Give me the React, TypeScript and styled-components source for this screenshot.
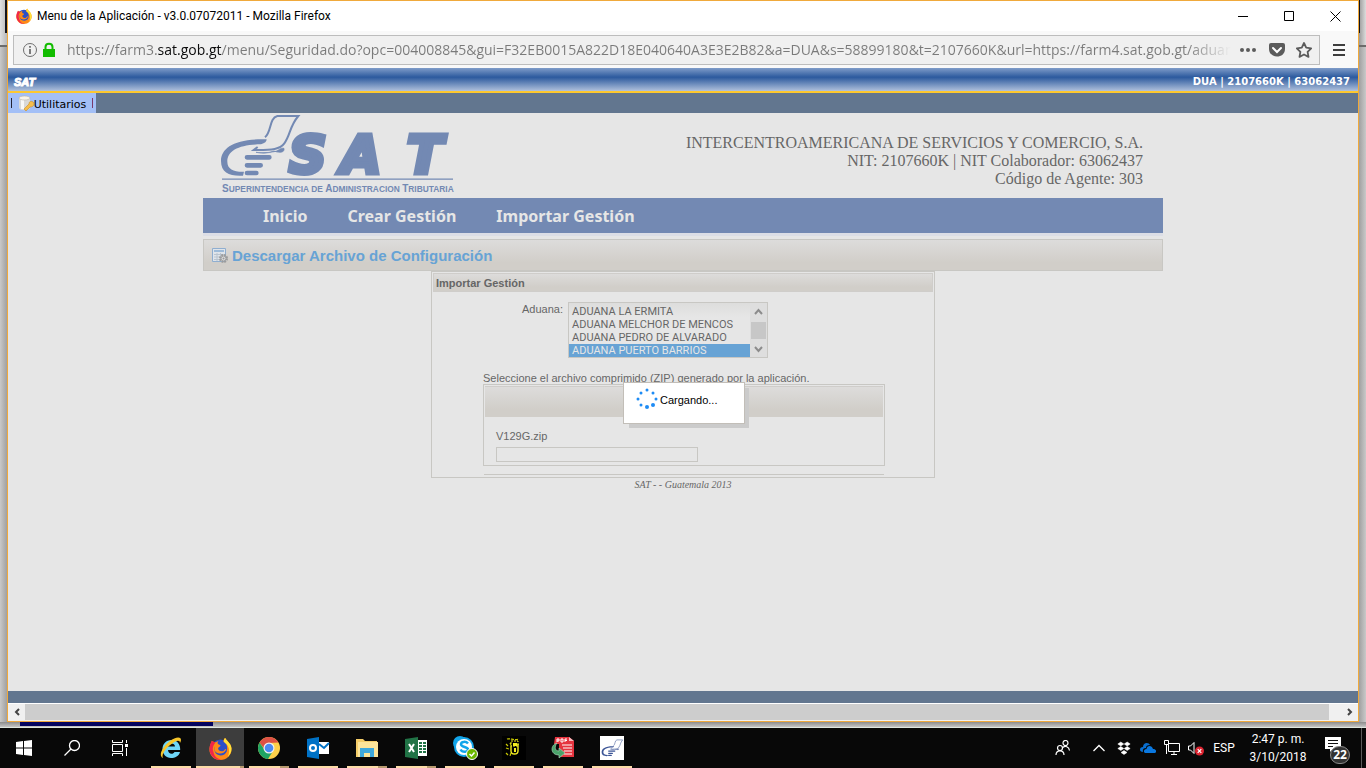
import React from 'react';
import styled, { createGlobalStyle } from 'styled-components';

const ui = '"Open Sans", "Noto Sans", sans-serif';
const arial = '"Liberation Sans", Arial, sans-serif';
const times = '"Liberation Serif", "Times New Roman", serif';
const verdana = '"DejaVu Sans", Verdana, sans-serif';

const c = {
  page: '#e6e6e6',
  brand: '#7389b3',
  slate: '#62768f',
  line: '#c8c7c3',
  text: '#666666',
  link: '#67a3d5',
  orange: '#f0a93b',
};

const panelFill = 'linear-gradient(#dddcdb, #d1cec9 75%)';

const Global = createGlobalStyle`
  * { box-sizing: border-box; }
  html, body { margin: 0; background: #060606; }
  button, input, select { font: inherit; margin: 0; }
  h1, h2, p { margin: 0; }
`;

const Desktop = styled.div`
  min-height: 100vh;
  display: flex;
  flex-direction: column;
  font-family: ${ui};
`;

const Stage = styled.div`
  flex: 1;
  display: flex;
`;

const Edge = styled.div<{ $side: 'left' | 'right' }>`
  width: 7px;
  display: flex;
  flex-direction: column;
  background: linear-gradient(${p => (p.$side === 'left' ? '90deg' : '270deg')}, #c9c9c9, #a0a0a0);
  &::before {
    content: '';
    height: 45px;
    background:
      linear-gradient(#15151c, #15151c) ${p => (p.$side === 'left' ? '5px' : '0')} 0 / ${p => (p.$side === 'left' ? 2 : 1)}px 33px no-repeat,
      ${p => (p.$side === 'left' ? 'linear-gradient(90deg, #e0e0e0, #b8b8b8)' : 'linear-gradient(90deg, #9a9a9a, #dcdcdc)')};
    border-bottom: 2px solid #6b6b6b;
  }
`;

const BottomEdge = styled.div`
  height: 6px;
  padding: 0 20px;
  background: linear-gradient(#8c8c8c, #c4c4c4);
  border-bottom: 1px solid #dfe6df;
`;

const NavyStrip = styled.div`
  width: 193px;
  height: 4px;
  background: #04045f;
`;

const Window = styled.div`
  flex: 1;
  min-width: 0;
  display: flex;
  flex-direction: column;
  border: 1px solid ${c.orange};
  background: ${c.page};
`;

const TitleBar = styled.header`
  height: 30px;
  display: flex;
  align-items: center;
  padding-left: 8px;
  gap: 5px;
  background: #fff;
  color: #000;
  font-family: Roboto, ${ui};
  font-size: 12px;
  svg { display: block; }
`;

const WindowButtons = styled.div`
  margin-left: auto;
  display: flex;
`;

const PlainButton = styled.button<{ $w?: number; $h?: number }>`
  width: ${p => p.$w ?? 28}px;
  height: ${p => p.$h ?? 30}px;
  flex: none;
  display: flex;
  align-items: center;
  justify-content: center;
  padding: 0;
  border: 0;
  background: none;
`;

const ToolBar = styled.div`
  height: 37px;
  display: flex;
  align-items: center;
  padding-left: 5px;
  background: #f9f9f9;
`;

const AddressBar = styled.div`
  flex: 1;
  min-width: 0;
  height: 30px;
  display: flex;
  align-items: center;
  padding: 0 0 0 7px;
  border: 1px solid #bdbdbd;
  background: #f0f0f0;
`;

const Address = styled.input`
  flex: 1;
  min-width: 0;
  height: 28px;
  margin-left: 8px;
  padding: 0;
  border: 0;
  outline: 0;
  font-size: 14px;
  color: #7a7a7a;
  background: linear-gradient(90deg, #7a7a7a 90px, #0c0c0d 90px, #0c0c0d 155px, #7a7a7a 155px);
  background-clip: text;
  -webkit-background-clip: text;
  -webkit-text-fill-color: transparent;
  mask-image: linear-gradient(270deg, transparent, #000 44px);
`;

const AppHeader = styled.div`
  height: 25px;
  display: flex;
  align-items: center;
  justify-content: space-between;
  padding: 4px 8px 0 6px;
  border-bottom: 2px solid #fdc82f;
  background: linear-gradient(#7f9cc9, #2c5a9e 40%, #b0c1dc);
  color: #fff;
  font: bold 10px ${verdana};
`;

const SmallLogo = styled.span`
  font: italic bold 11px ${arial};
  -webkit-text-stroke: 1px #fff;
`;

const MenuBar = styled.nav`
  height: 20px;
  display: flex;
  background: ${c.slate};
`;

const MenuTab = styled.button`
  width: 88px;
  display: flex;
  align-items: center;
  justify-content: space-between;
  padding: 0 3px;
  border: 0;
  background: #a3bff6;
  color: #000;
  font: 11px ${verdana};
  span { display: flex; align-items: flex-end; }
`;

const Bar = styled.i<{ $color: string }>`
  width: 1px;
  height: 10px;
  background: ${p => p.$color};
`;

const Page = styled.main`
  flex: 1;
  position: relative;
  border-bottom: 12px solid ${c.slate};
  color: ${c.text};
  font-family: ${arial};
  font-size: 11px;
`;

const Column = styled.div`
  width: 960px;
  max-width: 100%;
  margin: 0 auto;
`;

const Masthead = styled.div`
  height: 85px;
  display: flex;
  justify-content: space-between;
  padding: 0 20px 0 18px;
`;

const Company = styled.p`
  padding-top: 21px;
  text-align: right;
  font: 16px/18px ${times};
`;

const MainNav = styled.nav`
  height: 38px;
  display: flex;
  align-items: center;
  gap: 40px;
  padding-left: 60px;
  background: ${c.brand};
  border-bottom: 3px solid #dcdee6;
  a {
    color: ${c.page};
    text-decoration: none;
    font: bold 16px "Noto Sans", ${ui};
  }
`;

const PageTitle = styled.h1`
  height: 32px;
  display: flex;
  align-items: center;
  gap: 4px;
  margin-top: 3px;
  padding-left: 8px;
  border: 1px solid ${c.line};
  background: ${panelFill};
  color: ${c.link};
  font: bold 15px ${arial};
`;

const Panel = styled.section`
  width: 504px;
  height: 207px;
  margin: 0 auto;
  padding: 1px;
  border: 1px solid ${c.line};
`;

const PanelTitle = styled.h2`
  height: 19px;
  padding: 0 2px;
  border: 1px solid #cfcdca;
  background: ${panelFill};
  font: bold 11px/18px ${arial};
`;

const FieldRow = styled.div`
  display: flex;
  align-items: flex-start;
  gap: 5px;
  padding: 10px 0 0 89px;
  label { padding-top: 1px; line-height: 13px; }
`;

const ListFrame = styled.div`
  width: 200px;
  height: 56px;
  display: flex;
  border: 1px solid ${c.line};
  background: linear-gradient(#dddddc, ${c.page} 14px);
`;

const List = styled.select`
  flex: 1;
  height: 54px;
  padding: 2px 0 0;
  border: 0;
  border-radius: 0;
  outline: 0;
  overflow: hidden;
  scrollbar-width: none;
  background: none;
  color: ${c.text};
  font: 11px Roboto, ${arial};
  option {
    height: 13px;
    min-height: 13px;
    padding: 0 3px;
    line-height: 13px;
    color: ${c.text};
  }
  option:checked {
    color: ${c.page};
    background: linear-gradient(${c.link}, ${c.link});
  }
`;

const ListScroll = styled.div`
  width: 17px;
  display: flex;
  flex-direction: column;
  justify-content: space-between;
  align-items: center;
  background: #dedede;
`;

const Thumb = styled.div`
  width: 15px;
  height: 17px;
  background: #c7c7c7;
`;

const Upload = styled.div`
  width: 402px;
  margin: 14px 0 0 50px;
  line-height: 12px;
`;

const UploadBox = styled.div`
  height: 82px;
  padding: 1px;
  border: 1px solid ${c.line};
`;

const UploadHead = styled.div`
  height: 31px;
  border-top: 1px solid #cfcdca;
  background: ${panelFill};
`;

const UploadFile = styled.div`
  display: flex;
  flex-direction: column;
  align-items: flex-start;
  gap: 5px;
  padding: 13px 11px 0;
  input {
    width: 202px;
    height: 15px;
    border: 1px solid ${c.line};
    background: none;
  }
`;

const Rule = styled.hr`
  height: 1px;
  margin: 8px 1px 0;
  border: 0;
  background: ${c.line};
`;

const Footer = styled.p`
  text-align: center;
  font: italic 10px/14px ${times};
`;

const Loading = styled.div`
  position: absolute;
  top: 269px;
  left: 2px;
  right: 0;
  width: 122px;
  height: 42px;
  margin: 0 auto;
  display: flex;
  align-items: flex-start;
  gap: 2px;
  padding: 5px 12px;
  border: 1px solid #c2beb8;
  background: #fff;
  box-shadow: 5px 5px 0 -1px #cbcbcb;
  color: #000;
  line-height: 24px;
`;

const ScrollBar = styled.div`
  height: 18px;
  display: flex;
  justify-content: space-between;
  border-top: 1px solid #fff;
  border-bottom: 1px solid #f0f0f0;
  background: #cdcdcd;
`;

const ScrollButton = styled(PlainButton)`
  background: #f0f0f0;
`;

const TaskBar = styled.footer`
  height: 40px;
  display: flex;
  background: #080808;
  color: #fff;
`;

const Apps = styled.div`
  display: flex;
  gap: 1px;
  margin-left: 3px;
`;

const Task = styled.button<{ $active?: boolean; $stack?: boolean }>`
  width: 48px;
  height: 40px;
  display: flex;
  align-items: center;
  justify-content: center;
  padding: 0;
  border: 0;
  background:
    linear-gradient(#fbdba7, #fbdba7) ${p => (p.$active ? '0' : '4px')} 100% / ${p => (p.$active ? 44 : p.$stack ? 31 : 40)}px 2px no-repeat,
    linear-gradient(#b89b70, #b89b70) ${p => (p.$active ? '44px' : '35px')} 100% / ${p => (p.$active ? 4 : p.$stack ? 9 : 0)}px 2px no-repeat,
    ${p => (p.$active ? '#3d3d3d' : 'transparent')};
`;

const Tray = styled.div`
  margin-left: auto;
  display: flex;
  align-items: center;
  padding-right: 4px;
`;

const Language = styled.button`
  width: 32px;
  padding: 0;
  border: 0;
  background: none;
  color: #fff;
  font: 12px Roboto, ${ui};
`;

const Clock = styled.time`
  width: 76px;
  text-align: center;
  font: 12px/18px Roboto, ${ui};
`;

const Notices = styled.button`
  width: 46px;
  height: 40px;
  position: relative;
  padding: 0 0 4px 9px;
  border: 0;
  border-right: 1px solid #5a5a5a;
  background: none;
  text-align: left;
`;

const Badge = styled.span`
  position: absolute;
  left: 14px;
  top: 18px;
  width: 20px;
  height: 18px;
  border: 1px solid #8a8a8a;
  border-radius: 9px;
  background: #333;
  color: #fff;
  text-align: center;
  font: bold 12px/16px ${ui};
`;

const Firefox = ({ size }: { size: number }) => (
  <svg width={size} height={size} viewBox="0 0 24 24">
    <circle cx="12" cy="12.5" r="10" fill="#2b50c8" />
    <path d="M3 4C4 5 5 5.500 7 5.500c1.500-1 3-1 3-1C8 6 9 8 12 8.500c0 1.500-2 2-2.500 3 0 3 3 4 5.500 3 2-1 1-2 3-2-1 4-5 5.500-8.500 4.500C6 16 5 13 6 10c-1 1-1 4 1 7 4 4 10 2 11.500-2C20 10 18 6 15 5c0-2 1-4 2-4 1 3 6 5 6.500 11C24 19 18 24 12 24 5 24 0 19 .5 12 .8 9 2 7 3 4z" fill="#ff8a16" />
    <path d="M3 4C1 8 0 11 .8 15c1.500 6 7 9.500 12.500 9-5-1-8-4-8.500-8-2-4 0-8 2-10.500C5 5.500 4 5 3 4z" fill="#f0264a" />
    <path d="M17 1c1 3 6 5 6.500 11 0 4-2 7-4 9 2-4 2-9 0-12-1-2-4-3-4-4.500C15.500 3 16 1.500 17 1z" fill="#ffe23a" />
  </svg>
);

const Hand = () => (
  <>
    <path d="M200 103C105 100 63 128 63 168c0 36 26 46 66 44l3-12c-30 1-50-7-50-30 0-34 36-51 101-52 12-3 17-8 17-15z" />
    <path d="M195 97c20-16 12-58 37-64h63c-27 32-23 56-42 82-12 17-35 21-92 20l12-9" fill="none" stroke="currentColor" strokeWidth="6" />
    <path d="M168 142c20 2 56 1 66-6 4-4 10-8 18-6 2 8-4 12-12 12-14 0-16-6-22-3-12 6-32 7-50 3z" stroke="currentColor" strokeWidth="2" />
    <path d="M141 157h67M141 181h41M141 204h28" fill="none" stroke="currentColor" strokeWidth="14" strokeLinecap="round" />
  </>
);

const Logo = () => (
  <svg width="234" height="82" viewBox="0 0 234 82" fill={c.brand} color={c.brand} role="img" aria-label="SAT">
    <g transform="translate(-21 -8) scale(.33333)"><Hand /></g>
    <g fontFamily="DejaVu Sans" fontWeight="bold" fontStyle="italic" fontSize="52" stroke={c.brand} strokeWidth="5">
      <text x="68" y="60">S</text>
      <text x="120" y="60">A</text>
      <text x="186" y="60">T</text>
    </g>
    <path d="M1 65.500h231v1.200H1z" />
    <g fontFamily="Liberation Sans" fontWeight="bold" fontSize="8.4">
      <text x="1" y="79">
        <tspan fontSize="10">S</tspan>UPERINTENDENCIA DE <tspan fontSize="10">A</tspan>DMINISTRACION <tspan fontSize="10">T</tspan>RIBUTARIA
      </text>
    </g>
  </svg>
);

const dots: [number, number, number][] = [
  [12, 3, 1.5], [18, 6, 1.5], [21, 12, 1.5], [18, 18, 2], [12, 20, 2], [6, 18, 1.5], [3, 12, 1.5], [6, 6, 1.5],
];

const Svg = ({ s = 24, w, h, children }: { s?: number; w?: number; h?: number; children: React.ReactNode }) => (
  <svg width={w ?? s} height={h ?? s} viewBox={`0 0 ${w ?? s} ${h ?? s}`} fill="none">{children}</svg>
);

const tasks: { name: string; active?: boolean; stack?: boolean; icon: React.ReactNode }[] = [
  {
    name: 'Internet Explorer',
    icon: (
      <Svg>
        <path d="M21 16c-1 4-5 6-9 6-5 0-8.500-4-8.500-9s3.500-9 9-9 9 4 8.700 10H9c0 4 5 5 6.500 2z M9 10.500h7c0-4-7-4-7 0z" fill="#6fd6f7" fillRule="evenodd" />
        <path d="M4 22C-1 20 3 11 11 5c5-4 11-5 11-1 0 1-.5 2-1 3 0-3-3-3-7 0C7 11 2 19 4 22z" fill="#f8c62a" />
      </Svg>
    ),
  },
  { name: 'Firefox', active: true, icon: <Firefox size={23} /> },
  {
    name: 'Chrome',
    stack: true,
    icon: (
      <Svg>
        <circle cx="12" cy="12" r="11" fill="#fdd04a" />
        <path d="M2.500 6.500A11 11 0 0 1 21.500 6.500L12 7 9 15z" fill="#dd5145" />
        <path d="M2.500 6.500A11 11 0 0 0 11 23l5-8-8-.5z" fill="#1fa463" />
        <circle cx="12" cy="12" r="5.500" fill="#f1f1f1" /><circle cx="12" cy="12" r="4.300" fill="#4a8af4" />
      </Svg>
    ),
  },
  {
    name: 'Outlook',
    icon: (
      <Svg>
        <path d="M12 6h11v12H12z" fill="#fff" /><path d="M13 8l5 4 5-5" stroke="#0072c6" strokeWidth="2" />
        <path d="M1 3l12-2v22L1 21z" fill="#0072c6" /><circle cx="7" cy="12" r="3" stroke="#fff" strokeWidth="2" />
      </Svg>
    ),
  },
  {
    name: 'Explorador de archivos',
    stack: true,
    icon: (
      <Svg>
        <path d="M1 3h7l2 2h12v16H1z" fill="#f5cd69" /><path d="M3 6h20v15H3z" fill="#fde59a" />
        <path d="M5 12h14v9h-4v-4H9v4H5z" fill="#3fa9dc" />
      </Svg>
    ),
  },
  {
    name: 'Excel',
    stack: true,
    icon: (
      <Svg>
        <path d="M12 4h11v16H12z" fill="#fff" />
        <path d="M15 7h3m1 0h3m-7 3h3m1 0h3m-7 3h3m1 0h3m-7 3h3m1 0h3" stroke="#217346" strokeWidth="2" />
        <path d="M1 3l13-2v22L1 21z" fill="#217346" /><path d="M5 8l5 8m0-8l-5 8" stroke="#fff" strokeWidth="2" />
      </Svg>
    ),
  },
  {
    name: 'Skype',
    icon: (
      <Svg w={26} h={26}>
        <circle cx="8" cy="8" r="7" fill="#12a5ea" /><circle cx="12" cy="12" r="10" fill="#12a5ea" />
        <circle cx="12" cy="12" r="8" fill="#fff" />
        <path d="M16 8.500c-2-2.500-7-2-7 .7 0 3.500 7 2 7 5.300 0 3-6 3-7.500 0" stroke="#12a5ea" strokeWidth="2.500" />
        <circle cx="20" cy="19" r="5.500" fill="#6bb700" stroke="#fff" /><path d="M17.500 19l2 2 3-3.500" stroke="#fff" strokeWidth="1.500" />
      </Svg>
    ),
  },
  {
    name: 'Escudo',
    icon: (
      <Svg>
        <path d="M0 0h24v24H0z" fill="#000" />
        <path d="M5 3c3-1 8 2 12 0M4 8l2 2m-2 2l3 1m-3 4l2 2m2-12l1 2m0 8l-1 3" stroke="#c9c900" strokeWidth="1.200" strokeDasharray="3 1" />
        <path d="M9 5h7v5H9z" stroke="#f4ee22" strokeDasharray="2 1" /><path d="M9 10v5c0 4 7 4 7 0V8" stroke="#f4ee22" strokeWidth="1.400" />
        <path d="M11 7h4v3h-4zM12 12h2v4h-2z" fill="#f4ee22" />
      </Svg>
    ),
  },
  {
    name: 'PDF',
    icon: (
      <Svg>
        <path d="M4 1h14l5 4v16H8V8H3z" fill="#e5343f" /><path d="M18 1v4h5" fill="#f8b9bd" />
        <path d="M11 9h10m-9 3h9m-8 3h8m-8 3h8" stroke="#fff" />
        <path d="M6 6V3h2v2H6m4-2v3h2V3h-2m4 3V3h2m-2 1.500h2" stroke="#fff" />
        <path d="M6 7C-1 9-1 19 8 19v3l6-5-6-5v3c-4 0-5-4-2-8z" fill="#4aa36a" stroke="#b6dcc3" strokeWidth=".6" />
      </Svg>
    ),
  },
  {
    name: 'SAT',
    icon: (
      <svg width="24" height="24" viewBox="45 5 265 235" fill="#3c5596" color="#3c5596">
        <path d="M45-10h265v270H45z" fill="#fff" /><Hand />
      </svg>
    ),
  },
];

const customs = ['ADUANA LA ERMITA', 'ADUANA MELCHOR DE MENCOS', 'ADUANA PEDRO DE ALVARADO', 'ADUANA PUERTO BARRIOS'];

export default function App() {
  return (
    <Desktop>
      <Global />
      <Stage>
        <Edge $side="left" />
        <Window>
          <TitleBar>
            <Firefox size={16} />
            <span>Menu de la Aplicación - v3.0.07072011 - Mozilla Firefox</span>
            <WindowButtons>
              <PlainButton $w={46} aria-label="Minimizar"><Svg s={11}><path d="M0 5.500h10" stroke="#000" /></Svg></PlainButton>
              <PlainButton $w={46} aria-label="Maximizar"><Svg s={11}><path d="M.5.5h9v9h-9z" stroke="#000" /></Svg></PlainButton>
              <PlainButton $w={46} aria-label="Cerrar"><Svg s={11}><path d="M.5.5l10 10m0-10l-10 10" stroke="#000" /></Svg></PlainButton>
            </WindowButtons>
          </TitleBar>
          <ToolBar>
            <AddressBar>
              <PlainButton $w={18} aria-label="Información del sitio">
                <Svg s={16}><circle cx="8" cy="8" r="6.500" stroke="#6e6e6e" /><path d="M8 7v5M8 4v1.800" stroke="#6e6e6e" strokeWidth="1.800" /></Svg>
              </PlainButton>
              <PlainButton $w={20} aria-label="Conexión segura">
                <Svg s={16}><path d="M2 7h12v8H2z" fill="#12bc00" /><path d="M4.500 8V5c0-4.500 7-4.500 7 0v3" stroke="#12bc00" strokeWidth="2" /></Svg>
              </PlainButton>
              <Address
                aria-label="Dirección"
                readOnly
                value="https://farm3.sat.gob.gt/menu/Seguridad.do?opc=004008845&gui=F32EB0015A822D18E040640A3E3E2B82&a=DUA&s=58899180&t=2107660K&url=https://farm4.sat.gob.gt/aduana-sin"
              />
              <PlainButton $w={34} aria-label="Acciones">
                <Svg s={16}><circle cx="2" cy="8" r="2" fill="#5b5b5b" /><circle cx="8" cy="8" r="2" fill="#5b5b5b" /><circle cx="14" cy="8" r="2" fill="#5b5b5b" /></Svg>
              </PlainButton>
              <PlainButton $w={24} aria-label="Pocket">
                <Svg s={16}><path d="M2 1h12q2 0 2 2v4c0 10-16 10-16 0V3q0-2 2-2z" fill="#5b5b5b" /><path d="M4 6l4 4 4-4" stroke="#fff" strokeWidth="2" strokeLinecap="round" /></Svg>
              </PlainButton>
              <PlainButton $w={30} aria-label="Marcador">
                <Svg s={16}><path d="M8 1l2.200 4.700 5 .7-3.600 3.500.9 5L8 12.500 3.500 14.900l.9-5L.8 6.400l5-.7z" stroke="#5b5b5b" strokeWidth="1.800" strokeLinejoin="round" /></Svg>
              </PlainButton>
            </AddressBar>
            <PlainButton $w={38} aria-label="Menú">
              <Svg s={12}><path d="M0 1h12M0 6h12M0 11h12" stroke="#3f3f3f" strokeWidth="2" /></Svg>
            </PlainButton>
          </ToolBar>

          <AppHeader>
            <SmallLogo>SAT</SmallLogo>
            <span>DUA | 2107660K | 63062437</span>
          </AppHeader>
          <MenuBar>
            <MenuTab>
              <Bar $color="#223" />
              <span>
                <Svg s={16}>
                  <path d="M1 3v10c1 3 10 3 11 0V3z" fill="#d9d9d9" /><path d="M3 4h3v10H3z" fill="#f8f8f8" />
                  <ellipse cx="6.500" cy="3" rx="5.500" ry="2" fill="#f7f3ea" stroke="#b9b2a2" strokeWidth=".6" />
                  <path d="M6 14l5-5c0-4 5-3 5 0 0 2-2 3-4 3l-4 4z" fill="#f6bd4b" stroke="#c98d25" strokeWidth=".6" />
                </Svg>
                Utilitarios
              </span>
              <Bar $color="#7a3a6a" />
            </MenuTab>
          </MenuBar>

          <Page>
            <Column>
              <Masthead>
                <Logo />
                <Company>
                  INTERCENTROAMERICANA DE SERVICIOS Y COMERCIO, S.A.<br />
                  NIT: 2107660K | NIT Colaborador: 63062437<br />
                  Código de Agente: 303
                </Company>
              </Masthead>
              <MainNav>
                <a href="#inicio">Inicio</a>
                <a href="#crear">Crear Gestión</a>
                <a href="#importar">Importar Gestión</a>
              </MainNav>
              <PageTitle>
                <Svg s={16}>
                  <path d="M.5 1.500h13v13H.5z" fill="#dfe4ea" stroke="#8faed0" />
                  <path d="M2 4h10" stroke="#9dbbd9" strokeWidth="2" /><path d="M2 7.500h10M2 10h10M2 12.500h10M5 6v8M8.500 6v8" stroke="#b9c4cf" />
                  <circle cx="11.500" cy="11.500" r="3.500" stroke="#9c9c9c" strokeWidth="2" strokeDasharray="1.800 .95" />
                  <circle cx="11.500" cy="11.500" r="2.500" fill="#ddd" stroke="#9c9c9c" /><circle cx="11.500" cy="11.500" r="1" fill="#999" />
                </Svg>
                Descargar Archivo de Configuración
              </PageTitle>
              <Panel>
                <PanelTitle>Importar Gestión</PanelTitle>
                <FieldRow>
                  <label htmlFor="aduana">Aduana:</label>
                  <ListFrame>
                    <List id="aduana" size={4} defaultValue={customs[3]}>
                      {customs.map(name => <option key={name}>{name}</option>)}
                    </List>
                    <ListScroll>
                      <Svg w={9} h={18}><path d="M1 11l3.500-4L8 11" stroke="#8c8c8c" strokeWidth="2" /></Svg>
                      <Thumb />
                      <Svg w={9} h={18}><path d="M1 8l3.500 4L8 8" stroke="#8c8c8c" strokeWidth="2" /></Svg>
                    </ListScroll>
                  </ListFrame>
                </FieldRow>
                <Upload>
                  <p>Seleccione el archivo comprimido (ZIP) generado por la aplicación.</p>
                  <UploadBox>
                    <UploadHead />
                    <UploadFile>
                      <label htmlFor="archivo">V129G.zip</label>
                      <input id="archivo" readOnly />
                    </UploadFile>
                  </UploadBox>
                  <Rule />
                </Upload>
              </Panel>
              <Footer>SAT - - Guatemala 2013</Footer>
            </Column>
            <Loading role="status">
              <Svg w={22} h={24}>
                {dots.map(([x, y, r]) => <circle key={`${x}-${y}`} cx={x - 1} cy={y - 1} r={r} fill="#1e8cf5" />)}
              </Svg>
              Cargando...
            </Loading>
          </Page>

          <ScrollBar>
            <ScrollButton $w={17} $h={16} aria-label="Izquierda"><Svg s={8}><path d="M6 1L3 4l3 3" stroke="#444" strokeWidth="2" /></Svg></ScrollButton>
            <ScrollButton $w={29} $h={16} aria-label="Derecha"><Svg w={20} h={8}><path d="M14 1l3 3-3 3" stroke="#444" strokeWidth="2" /></Svg></ScrollButton>
          </ScrollBar>
        </Window>
        <Edge $side="right" />
      </Stage>
      <BottomEdge><NavyStrip /></BottomEdge>

      <TaskBar>
        <PlainButton $w={48} $h={40} aria-label="Inicio">
          <Svg s={16}><path d="M0 2l7-1v6.500H0zM8 1l8-1v7.500H8zM0 8.500h7V15l-7-1zM8 8.500h8V16l-8-1z" fill="#fff" /></Svg>
        </PlainButton>
        <PlainButton $w={48} $h={40} aria-label="Buscar">
          <Svg s={16}><circle cx="10.500" cy="5.500" r="5" stroke="#fff" strokeWidth="1.300" /><path d="M7 9L.5 15.500" stroke="#fff" strokeWidth="1.300" /></Svg>
        </PlainButton>
        <PlainButton $w={48} $h={40} aria-label="Vista de tareas">
          <Svg s={16}><path d="M.5 0v2.500h10V0M.5 4.500h10v7H.5zM.5 16v-2.500h10V16M14.500 0v3m0 5v8" stroke="#fff" /><path d="M13 4h3v3h-3z" fill="#fff" /></Svg>
        </PlainButton>
        <Apps>
          {tasks.map(t => (
            <Task key={t.name} $active={t.active} $stack={t.stack} aria-label={t.name}>{t.icon}</Task>
          ))}
        </Apps>
        <Tray>
          <PlainButton $w={46} $h={40} aria-label="Contactos">
            <Svg s={16}>
              <circle cx="10.500" cy="3" r="2.500" stroke="#fff" strokeWidth="1.200" /><path d="M8 7.500c2-2 6-1 6.500 3" stroke="#fff" strokeWidth="1.200" />
              <circle cx="5" cy="8" r="2.500" stroke="#fff" strokeWidth="1.200" /><path d="M1 15c0-5.500 8-5.500 8 0" stroke="#fff" strokeWidth="1.200" />
            </Svg>
          </PlainButton>
          <PlainButton $w={26} $h={40} aria-label="Mostrar iconos ocultos">
            <Svg s={14}><path d="M1.500 10L7 4.500l5.500 5.500" stroke="#fff" strokeWidth="1.300" /></Svg>
          </PlainButton>
          <PlainButton $w={24} $h={40} aria-label="Dropbox">
            <Svg s={14}><path d="M3.800 1l3 2-3 2-3-2zM10.200 1l3 2-3 2-3-2zM3.800 5.500l3 2-3 2-3-2zM10.200 5.500l3 2-3 2-3-2zM7 9.500l3 2-3 2-3-2z" fill="#fff" stroke="#fff" strokeWidth=".5" /></Svg>
          </PlainButton>
          <PlainButton $w={24} $h={40} aria-label="OneDrive">
            <Svg s={16}><path d="M3 12c-4 0-4-5 0-5 0-5 6-5 7-2-3 0-4 1-4 3-3 0-3.500 2-3 4z" fill="#0a6fd0" /><path d="M5 13c-2-1-1-4 1.500-4C7 5 12 5 13 9c4 0 4 4 1 4z" fill="#0a78e0" /></Svg>
          </PlainButton>
          <PlainButton $w={24} $h={40} aria-label="Red">
            <Svg s={16}><path d="M4.500 3.500h11v8h-11zM7 14.500h6M10 11.500v3M2.500 5v9" stroke="#fff" /><path d="M.5.5h4v4h-4z" stroke="#fff" fill="#080808" /></Svg>
          </PlainButton>
          <PlainButton $w={24} $h={40} aria-label="Volumen">
            <Svg s={16}><path d="M.5 6v4h2L6 13.500v-11L2.500 6z" stroke="#fff" /><circle cx="11.500" cy="11" r="4.500" fill="#dc2430" /><path d="M9.700 9.200l3.600 3.600m0-3.600l-3.600 3.600" stroke="#fff" strokeWidth="1.200" /></Svg>
          </PlainButton>
          <Language>ESP</Language>
          <Clock>2:47 p. m.<br />3/10/2018</Clock>
          <Notices aria-label="22 notificaciones">
            <Svg s={16}><path d="M0 1h16v12H8l-3 3v-3H0z" fill="#fff" /><path d="M3 4.500h10M3 7.500h10M3 10.500h5" stroke="#111" /></Svg>
            <Badge>22</Badge>
          </Notices>
        </Tray>
      </TaskBar>
    </Desktop>
  );
}
